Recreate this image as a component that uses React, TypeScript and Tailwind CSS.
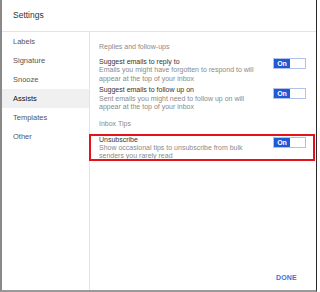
import React from "react";

function Toggle({ mt }: { mt: string }) {
  return (
    <div className={`flex h-[11px] w-[33px] shrink-0 border border-[#b3c0ea] ${mt}`}>
      <div className="flex w-[16px] items-center justify-center bg-[#1d5ad5] text-[7px] font-bold leading-none text-white">
        On
      </div>
      <div className="flex-1 bg-white" />
    </div>
  );
}

export default function App() {
  const items = ["Labels", "Signature", "Snooze", "Assists", "Templates", "Other"];
  return (
    <div
      className="relative h-[292px] w-[320px] bg-white"
      style={{ fontFamily: '"Liberation Sans", Arial, sans-serif' }}
    >
      <div className="flex h-[292px] w-[317px] flex-col border-b-2 border-l-2 border-r border-b-[#9a9a9a] border-l-[#8a8a8a] border-r-[#2a2a2a]">
        <div className="flex h-[32px] shrink-0 items-center border-b border-[#e4e4e4] pl-[11px] pb-[1px] text-[8.5px] text-[#333]">
          Settings
        </div>
        <div className="flex flex-1">
          <div className="w-[88px] shrink-0 border-r border-[#e4e4e4]">
            {items.map((it) => (
              <div
                key={it}
                className={`flex h-[19px] items-center pl-[11px] text-[7.5px] ${
                  it === "Assists" ? "bg-[#f0f0f0] text-[#111]" : "text-[#555]"
                }`}
              >
                {it}
              </div>
            ))}
          </div>
          <div className="flex flex-1 flex-col pl-[9px] pr-[10px] pt-[10.75px] pb-[7.5px] text-[7px] leading-[8.5px]">
            <div className="text-[#8a8a8a]">Replies and follow-ups</div>
            <div className="mt-[6.5px] flex items-start justify-between">
              <div>
                <div className="text-[#333]">Suggest emails to reply to</div>
                <div className="text-[#8a8a8a]">
                  <div>Emails you might have forgotten to respond to will</div>
                  <div>appear at the top of your inbox</div>
                </div>
              </div>
              <Toggle mt="mt-0" />
            </div>
            <div className="mt-[3.2px] flex items-start justify-between">
              <div>
                <div className="text-[#333]">Suggest emails to follow up on</div>
                <div className="text-[#8a8a8a]">
                  <div>Sent emails you might need to follow up on will</div>
                  <div>appear at the top of your inbox</div>
                </div>
              </div>
              <Toggle mt="mt-[1.5px]" />
            </div>
            <div className="mt-[8px] text-[#8a8a8a]">Inbox Tips</div>
            <div className="mt-[7.25px] flex items-start justify-between">
              <div className="leading-[8px]">
                <div className="text-[#333]">Unsubscribe</div>
                <div className="text-[#8a8a8a]">
                  <div>Show occasional tips to unsubscribe from bulk</div>
                  <div>senders you rarely read</div>
                </div>
              </div>
              <Toggle mt="mt-[1.25px]" />
            </div>
            <div className="mt-auto self-end pr-[9px] font-bold tracking-[0.2px] text-[#4a6fd6]">
              DONE
            </div>
          </div>
        </div>
      </div>
      <div className="absolute left-[89px] top-[134px] h-[27px] w-[226px] border-2 border-[#e3121b]" />
    </div>
  );
}
